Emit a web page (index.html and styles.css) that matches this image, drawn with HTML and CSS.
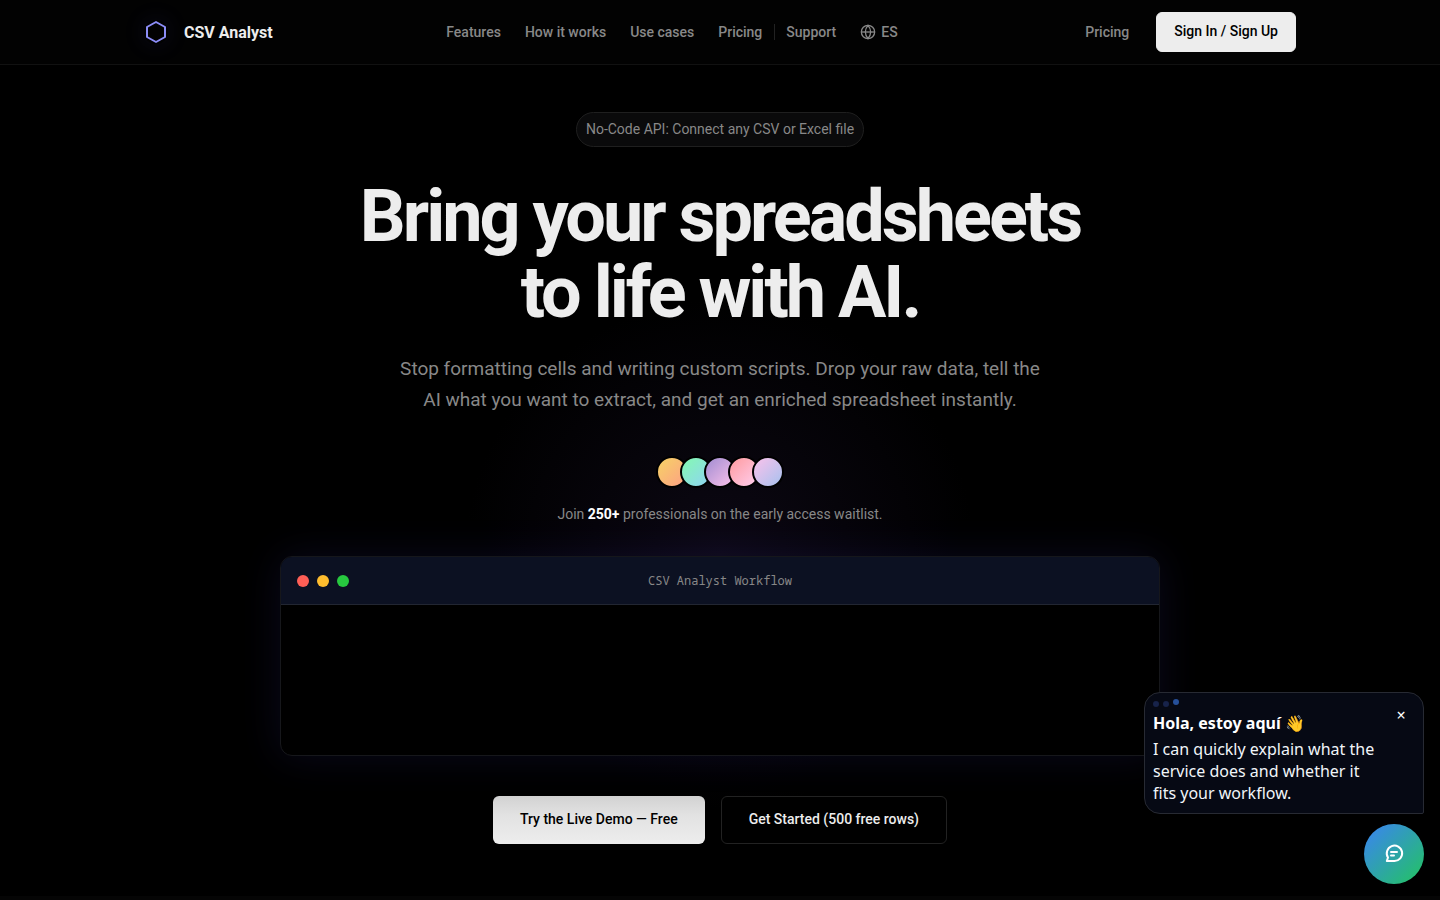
FILE: index.html
```html
<!DOCTYPE html>
<html lang="en">
  <head>
    <meta charset="UTF-8" />
    <meta name="viewport" content="width=device-width, initial-scale=1.0" />
    <title>CSV Analyst</title>
    <link rel="stylesheet" href="styles.css">
  </head>
  <body>
    <header class="site-header">
      <div class="header-inner">
        <a class="brand" href="#">
          <svg class="brand-icon" width="24" height="24" viewBox="0 0 24 24" fill="none" stroke="#8b8cf6" stroke-width="2" stroke-linejoin="round">
            <path d="M12 2L21 7V17L12 22L3 17V7Z" />
          </svg>
          <span>CSV Analyst</span>
        </a>
        <nav class="nav">
          <a href="#features">Features</a>
          <a href="#how">How it works</a>
          <a href="#cases">Use cases</a>
          <a href="#pricing">Pricing</a>
          <a class="nav-support" href="#support">Support</a>
          <a class="nav-lang" href="#es">
            <svg width="16" height="16" viewBox="0 0 24 24" fill="none" stroke="currentColor" stroke-width="2">
              <circle cx="12" cy="12" r="10" />
              <path d="M2 12H22" />
              <path d="M12 2a15.3 15.3 0 0 1 4 10 15.3 15.3 0 0 1-4 10 15.3 15.3 0 0 1-4-10 15.3 15.3 0 0 1 4-10z" />
            </svg>
            ES
          </a>
        </nav>
        <div class="header-actions">
          <a class="pricing-link" href="#pricing">Pricing</a>
          <button class="btn btn-small">Sign In / Sign Up</button>
        </div>
      </div>
    </header>

    <main>
      <section class="hero">
        <div class="badge">No-Code API: Connect any CSV or Excel file</div>
        <h1>Bring your spreadsheets<br />to life with AI.</h1>
        <p class="subtitle">
          Stop formatting cells and writing custom scripts. Drop your raw data,
          tell the AI what you want to extract, and get an enriched spreadsheet
          instantly.
        </p>
        <div class="avatars">
          <span class="avatar avatar-orange"></span>
          <span class="avatar avatar-green"></span>
          <span class="avatar avatar-purple"></span>
          <span class="avatar avatar-pink"></span>
          <span class="avatar avatar-lilac"></span>
        </div>
        <p class="waitlist">
          Join <strong>250+</strong> professionals on the early access waitlist.
        </p>
        <div class="window">
          <div class="window-bar">
            <div class="window-dots">
              <span class="dot dot-red"></span>
              <span class="dot dot-yellow"></span>
              <span class="dot dot-green"></span>
            </div>
            <span class="window-title">CSV Analyst Workflow</span>
          </div>
          <div class="window-body"></div>
        </div>
        <div class="cta">
          <button class="btn btn-primary">Try the Live Demo — Free</button>
          <button class="btn btn-outline">Get Started (500 free rows)</button>
        </div>
      </section>
      <section class="next-section"></section>
    </main>

    <aside class="chat">
      <div class="chat-bubble">
        <div class="typing"><span></span><span></span><span></span></div>
        <strong class="chat-title">Hola, estoy aquí 👋</strong>
        <p>I can quickly explain what the service does and whether it fits your workflow.</p>
        <button class="chat-close" aria-label="Close">×</button>
      </div>
      <button class="chat-button" aria-label="Open chat">
        <svg width="24" height="24" viewBox="0 0 24 24" fill="none" stroke="#fff" stroke-width="2" stroke-linecap="round" stroke-linejoin="round">
          <path d="M4.8 20L6 16.5A7.7 7.7 0 1 1 12.2 20Z" />
          <path d="M9 11H15M9 14.5H12" />
        </svg>
      </button>
    </aside>
  </body>
</html>
```
FILE: styles.css
```css
* {
  box-sizing: border-box;
}

body {
  margin: 0;
  background: #000;
  color: #ededed;
  font-family: Roboto, "Liberation Sans", sans-serif;
  font-size: 14px;
  overflow-x: hidden;
}

a {
  color: inherit;
  text-decoration: none;
}

button {
  font-family: inherit;
  cursor: pointer;
}

.site-header {
  background: #020202;
  border-bottom: 1px solid #111;
}

.header-inner {
  max-width: 1200px;
  height: 64px;
  margin: 0 auto;
  padding: 0 24px;
  display: flex;
  align-items: center;
  justify-content: space-between;
}

.brand {
  display: flex;
  align-items: center;
  gap: 16px;
  font-size: 16px;
  font-weight: 700;
}

.brand-icon {
  border-radius: 50%;
  box-shadow: 0 0 24px rgba(99, 102, 241, 0.12);
}

.nav {
  display: flex;
  align-items: center;
  gap: 24px;
  color: #888;
  font-weight: 500;
}

.nav-support {
  position: relative;
}

.nav-support::before {
  content: "";
  position: absolute;
  left: -12px;
  top: 0;
  width: 1px;
  height: 16px;
  background: #222;
}

.nav-lang {
  display: flex;
  align-items: center;
  gap: 5px;
}

.header-actions {
  display: flex;
  align-items: center;
  gap: 13px;
}

.pricing-link {
  padding: 0 14px;
  color: #888;
  font-weight: 500;
}

.btn {
  border: 1px solid #ededed;
  border-radius: 6px;
  background: #ededed;
  color: #000;
  font-size: 14px;
  font-weight: 500;
}

.btn-small {
  height: 40px;
  padding: 0 17px 2px;
}

.hero {
  padding: 47px 24px 52px;
  display: flex;
  flex-direction: column;
  align-items: center;
  text-align: center;
  background: radial-gradient(circle 300px at 50% 490px, #0c0814, transparent 85%);
}

.badge {
  padding: 8px 9px;
  border: 1px solid #1f1f1f;
  border-radius: 18px;
  background: #0a0a0b;
  color: #888;
  font-size: 14px;
  line-height: 17px;
}

h1 {
  margin: 32px 0 0;
  font-size: 72px;
  font-weight: 700;
  line-height: 76px;
  letter-spacing: -3px;
}

.subtitle {
  max-width: 660px;
  margin: 22px 0 0;
  color: #888;
  font-size: 19px;
  line-height: 31px;
}

.avatars {
  display: flex;
  margin-top: 41px;
}

.avatar {
  width: 32px;
  height: 32px;
  margin-left: -8px;
  border: 2px solid #000;
  border-radius: 50%;
}

.avatar:first-child {
  margin-left: 0;
}

.avatar-orange {
  background: linear-gradient(135deg, #f6d365, #fda085);
}

.avatar-green {
  background: linear-gradient(135deg, #84fab0, #8fd3f4);
}

.avatar-purple {
  background: linear-gradient(135deg, #a18cd1, #fbc2eb);
}

.avatar-pink {
  background: linear-gradient(135deg, #ff9a9e, #fecfef);
}

.avatar-lilac {
  background: linear-gradient(135deg, #fbc2eb, #a6c1ee);
}

.waitlist {
  margin: 16px 0 32px;
  color: #888;
  font-size: 14px;
  line-height: 20px;
}

.waitlist strong {
  color: #fff;
}

.window {
  width: 100%;
  max-width: 880px;
  border: 1px solid #16171b;
  border-radius: 12px;
  background: #000;
  overflow: hidden;
  box-shadow: 0 0 40px rgba(79, 70, 229, 0.12);
}

.window-bar {
  display: grid;
  grid-template-columns: 1fr auto 1fr;
  align-items: center;
  height: 48px;
  padding: 0 16px;
  border-bottom: 1px solid #222632;
  background: #0c1122;
}

.window-dots {
  display: flex;
  gap: 8px;
}

.dot {
  width: 12px;
  height: 12px;
  border-radius: 50%;
}

.dot-red {
  background: #ff5f56;
}

.dot-yellow {
  background: #ffbd2e;
}

.dot-green {
  background: #27c93f;
}

.window-title {
  color: #888;
  font-family: "Noto Sans Mono", "DejaVu Sans Mono", monospace;
  font-size: 12px;
}

.window-body {
  height: 150px;
}

.cta {
  display: flex;
  gap: 16px;
  margin-top: 40px;
}

.btn-primary,
.btn-outline {
  height: 48px;
  padding: 0 27px 2px;
}

.btn-primary {
  background: linear-gradient(#d2d2d2, #e2e2e2 40%, #ededed);
  border: none;
}

.btn-outline {
  border-color: #222;
  background: #000;
  color: #ededed;
}

.next-section {
  height: 4px;
  background: #050505;
}

.chat {
  position: fixed;
  right: 16px;
  bottom: 16px;
  display: flex;
  flex-direction: column;
  align-items: flex-end;
  gap: 10px;
  font-family: "Noto Sans", sans-serif;
}

.chat-bubble {
  position: relative;
  width: 280px;
  padding: 8px 40px 9px 8px;
  border: 1px solid #272a33;
  border-radius: 16px 16px 2px 16px;
  background: #060914;
  color: #f1f5f9;
  font-size: 16px;
  line-height: 22px;
}

.typing {
  display: flex;
  gap: 4px;
  height: 11px;
}

.typing span {
  width: 6px;
  height: 6px;
  border-radius: 50%;
  background: #17234a;
}

.typing span:last-child {
  margin-top: -2px;
  background: #26509a;
}

.chat-title {
  display: block;
  color: #fff;
}

.chat-bubble p {
  margin: 4px 0 0;
}

.chat-close {
  position: absolute;
  top: 10px;
  right: 10px;
  width: 24px;
  height: 24px;
  padding: 0;
  border: none;
  background: none;
  color: #fff;
  font-size: 16px;
}

.chat-button {
  display: flex;
  align-items: center;
  justify-content: center;
  width: 60px;
  height: 60px;
  padding: 0 0 2px;
  border: none;
  border-radius: 50%;
  background: linear-gradient(135deg, #3b82f6, #22c55e);
}
```
